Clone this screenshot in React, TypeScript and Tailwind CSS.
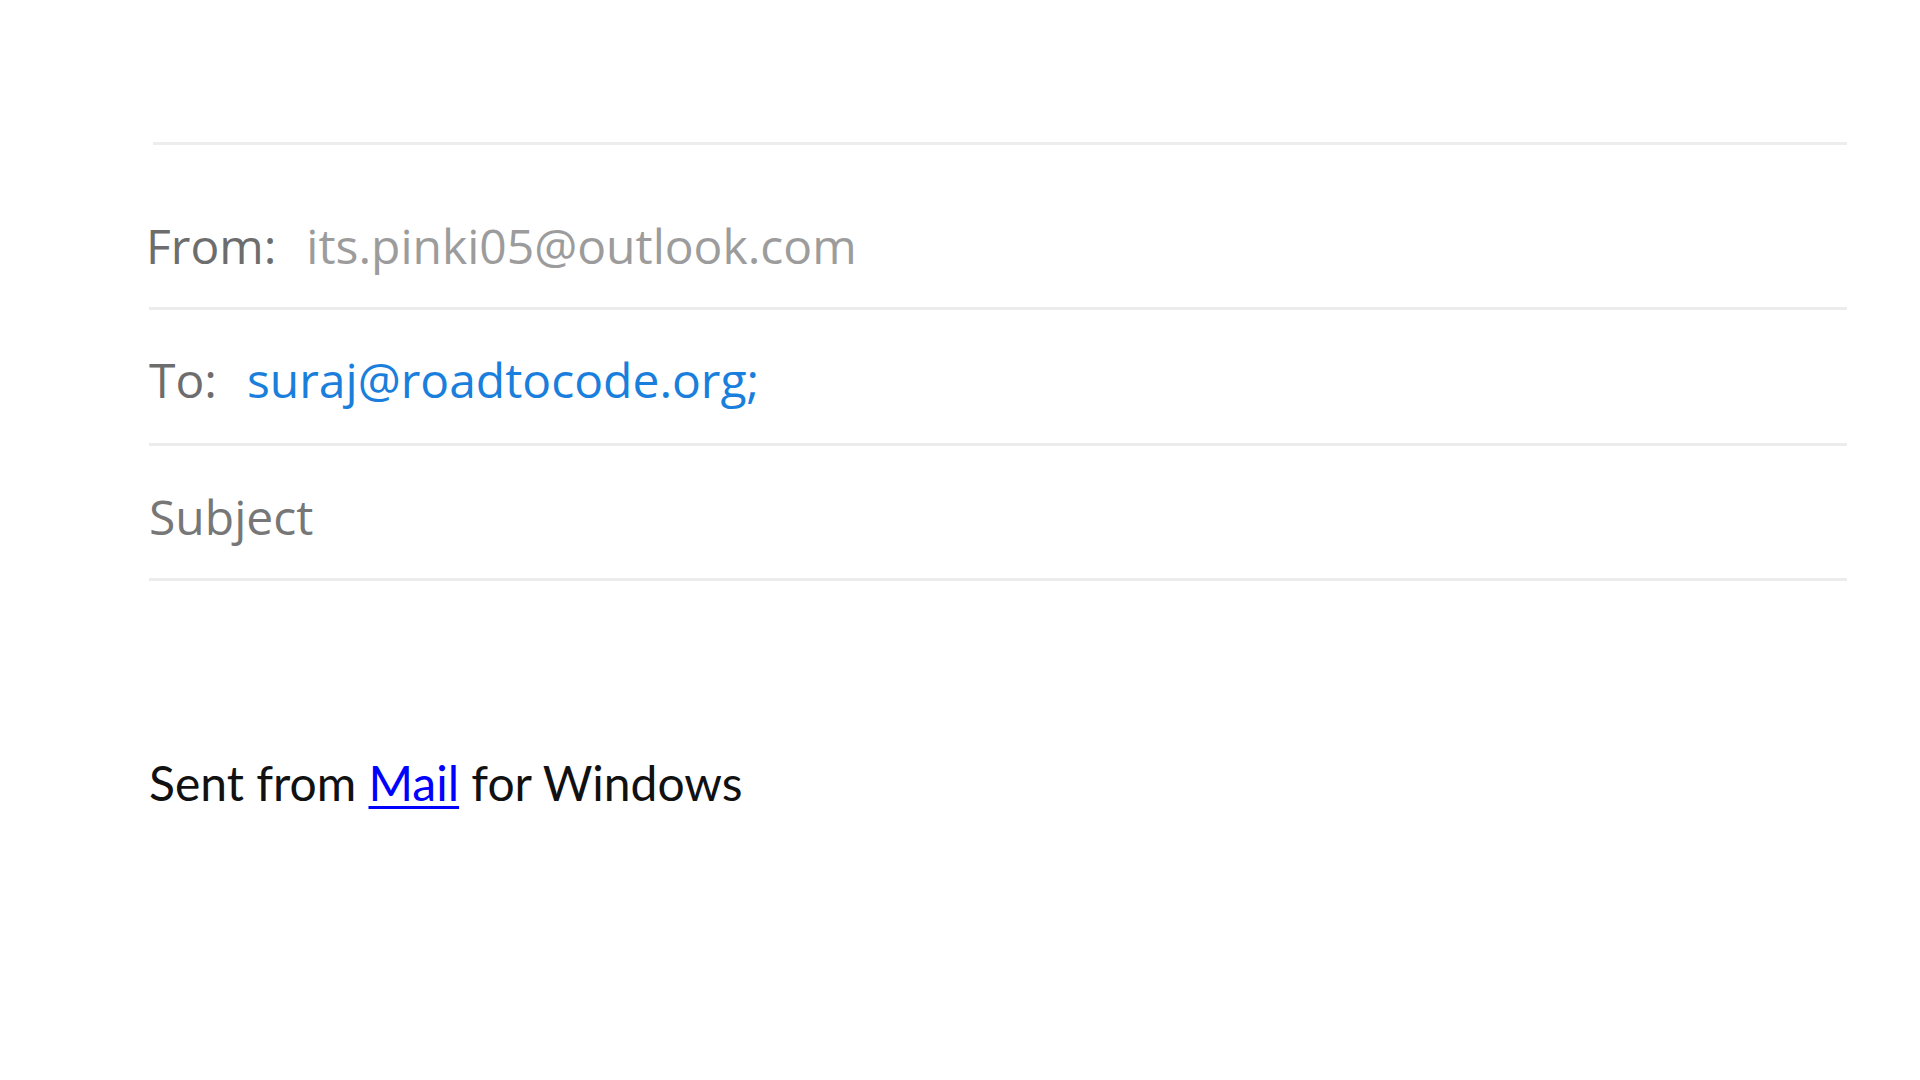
const FIELD_FONT = { fontFamily: '"Open Sans", "Noto Sans", sans-serif' };

const App = () => {
  return (
    <div className="min-h-screen bg-white pl-[149px] pr-[73px] pt-[142px]">
      <div className="border-t-[3px] border-[#ededed] ml-1" />

      <div
        className="h-[165px] flex items-end pb-[37px] border-b-[3px] border-[#ececec] text-[48px] leading-none"
        style={FIELD_FONT}
      >
        <span className="text-[#6d6d6d] -ml-[3px]">From:</span>
        <span className="text-[#9c9c9c] ml-[30px]">its.pinki05@outlook.com</span>
      </div>

      <div
        className="h-[136px] flex items-end pb-[39px] border-b-[3px] border-[#ececec] text-[48px] leading-none"
        style={FIELD_FONT}
      >
        <span className="text-[#6d6d6d]">To:</span>
        <span className="text-[#1a7fdc] ml-[30px]">suraj@roadtocode.org;</span>
      </div>

      <div
        className="h-[135px] flex items-end pb-[37px] border-b-[3px] border-[#ececec] text-[48px] leading-none"
        style={FIELD_FONT}
      >
        <span className="text-[#777777]">Subject</span>
      </div>

      <p
        className="mt-[178px] text-[48px] leading-none text-[#111111]"
        style={{ fontFamily: 'Lato, "Liberation Sans", sans-serif' }}
      >
        Sent from{' '}
        <a href="#" className="text-[#0000ff] underline underline-offset-[5px] decoration-[3px]">
          Mail
        </a>{' '}
        for Windows
      </p>
    </div>
  );
};

export default App;
